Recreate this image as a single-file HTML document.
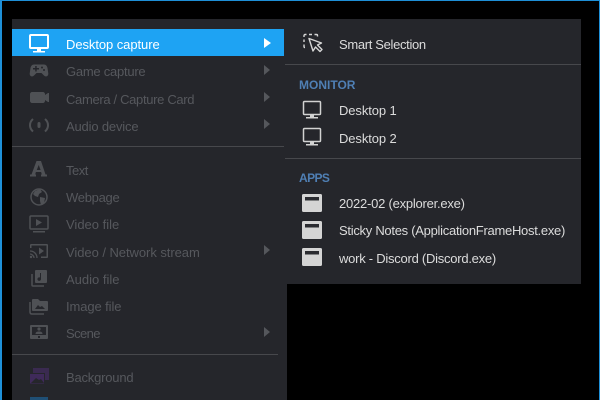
<!DOCTYPE html>
<html><head><meta charset="utf-8">
<style>
html,body{margin:0;padding:0;background:#000;}
#r{position:relative;width:600px;height:400px;overflow:hidden;background:#000;font-family:"Liberation Sans",sans-serif;font-size:13px;}
.b{position:absolute;}
.t{position:absolute;white-space:nowrap;line-height:16px;height:16px;}
.d{color:#56585d;left:66px;}
.l{color:#dcdcdc;left:339px;}
.h{color:#4f7fb4;left:299px;font-weight:bold;font-size:12px;}
svg{position:absolute;left:0;top:0;}
</style></head><body>
<div id="r">
<div class="b" style="left:0;top:0;width:600px;height:1px;background:#1e8fd6"></div>
<div class="b" style="left:0;top:0;width:2px;height:400px;background:#1e8fd6"></div>
<div class="b" style="left:599px;top:0;width:1px;height:400px;background:#1e8fd6"></div>
<div class="b" style="left:12px;top:19px;width:275px;height:381px;background:#25262b"></div>
<div class="b" style="left:285px;top:19px;width:296px;height:265px;background:#25262b"></div>
<div class="b" style="left:12px;top:29px;width:272px;height:27px;background:#1ea3f3"></div>
<div class="b" style="left:12px;top:146px;width:272px;height:1px;background:#47484c"></div>
<div class="b" style="left:12px;top:354px;width:266px;height:1px;background:#47484c"></div>
<div class="b" style="left:285px;top:64px;width:296px;height:1px;background:#47484c"></div>
<div class="b" style="left:285px;top:158px;width:296px;height:1px;background:#47484c"></div>

<div class="t" style="left:66px;top:37px;color:#fff;letter-spacing:-.07px">Desktop capture</div>
<div class="t d" style="top:64px;letter-spacing:-.25px">Game capture</div>
<div class="t d" style="top:92px;letter-spacing:-.33px">Camera / Capture Card</div>
<div class="t d" style="top:119px;letter-spacing:-.17px">Audio device</div>
<div class="t d" style="top:163px;letter-spacing:-.5px">Text</div>
<div class="t d" style="top:190px;letter-spacing:-.28px">Webpage</div>
<div class="t d" style="top:217px">Video file</div>
<div class="t d" style="top:245px;letter-spacing:-.05px">Video / Network stream</div>
<div class="t d" style="top:272px">Audio file</div>
<div class="t d" style="top:299px;letter-spacing:-.1px">Image file</div>
<div class="t d" style="top:326px;letter-spacing:-.6px">Scene</div>
<div class="t d" style="top:370px;letter-spacing:-.2px">Background</div>

<div class="t l" style="top:37px;letter-spacing:-.33px">Smart Selection</div>
<div class="t h" style="top:77px">MONITOR</div>
<div class="t l" style="top:103px;letter-spacing:-.1px">Desktop 1</div>
<div class="t l" style="top:131px;letter-spacing:-.1px">Desktop 2</div>
<div class="t h" style="top:170px;letter-spacing:-.6px">APPS</div>
<div class="t l" style="top:196px;letter-spacing:-.23px">2022-02 (explorer.exe)</div>
<div class="t l" style="top:223px;letter-spacing:-.28px">Sticky Notes (ApplicationFrameHost.exe)</div>
<div class="t l" style="top:251px;letter-spacing:-.25px">work - Discord (Discord.exe)</div>

<svg width="600" height="400" viewBox="0 0 600 400">
<!-- arrows -->
<path d="M264 38l7 5-7 5z" fill="#fff"/>
<g fill="#55575c">
<path d="M264 65l6 5-6 5z"/><path d="M264 92l6 5-6 5z"/><path d="M264 119l6 5-6 5z"/><path d="M264 245l6 5-6 5z"/><path d="M264 327l6 5-6 5z"/>
</g>
<!-- desktop selected -->
<g fill="none" stroke="#fff" stroke-width="2"><rect x="30" y="35" width="18" height="13" rx="1"/></g>
<path d="M37 49h4v2h4v1.500H33V51h4z" fill="#fff"/>
<!-- disabled icons -->
<g fill="#4f5155">
<!-- gamepad -->
<path d="M34 64.500h10c2 0 3 1.500 3.500 3.500l.8 5.500c.2 2.500-2.300 4-4.300 2l-2.500-2.500h-5l-2.500 2.500c-2 2-4.500.5-4.300-2l.8-5.500c.5-2 1.500-3.500 3.500-3.500z"/>
<!-- camera -->
<path d="M32 92h11c1 0 2 1 2 2v1l3-2h1v9h-1l-3-2v1c0 1-1 2-2 2H32c-1 0-2-1-2-2v-7c0-1 1-2 2-2z"/>
<!-- audio dot -->
<rect x="37.500" y="122" width="3" height="6" rx="1.500"/>
<!-- A -->
<path fill-rule="evenodd" d="M36.500 161h4.500l4.500 13.500h1.500v2h-6v-2h.8l-.7-2.500h-5.200l-.7 2.500h.8v2h-6v-2h1.500zM38.700 165l-1.900 5h3.800z"/>
</g>
<!-- audio arcs -->
<path d="M33 119c-4 3.500-4 9 0 12.500M45 119c4 3.500 4 9 0 12.500" fill="none" stroke="#4f5155" stroke-width="2"/>
<g fill="#25262b"><rect x="33" y="68" width="6" height="1.500"/><rect x="35.200" y="66" width="1.500" height="5.500"/><circle cx="42" cy="67.500" r="1"/><circle cx="44" cy="70" r="1"/></g>
<!-- globe -->
<circle cx="39" cy="197" r="8" fill="none" stroke="#4f5155" stroke-width="1.500"/>
<path d="M35 191l5-2 2 3-3 2-1 3-3-1-2-2zM40 197l5 1-1 5-3 2-1-4z" fill="#4f5155"/>
<!-- video -->
<g fill="none" stroke="#4f5155" stroke-width="1.500"><rect x="30" y="216" width="18" height="13" rx="1"/></g>
<path d="M36 219l6 3.500-6 3.500zM33 231h12v1.500H33z" fill="#4f5155"/>
<!-- stream -->
<path d="M31 244h16c.5 0 1 .5 1 1v12c0 .5-.5 1-1 1H41v-1.500h5.500v-11h-15V248H30v-3c0-.5.500-1 1-1z" fill="#4f5155"/>
<path d="M39 247.500l5 3.500-5 3.500z" fill="#4f5155"/>
<path d="M30 251c4 0 7 3 7 7M30 254c2 0 4 2 4 4" fill="none" stroke="#4f5155" stroke-width="1.300"/>
<circle cx="31" cy="257" r="1.200" fill="#4f5155"/>
<!-- audio file -->
<rect x="35" y="270" width="12" height="13" rx="1" fill="#4f5155"/>
<path d="M32 274v11c0 .6.400 1 1 1h11" fill="none" stroke="#4f5155" stroke-width="1.500"/>
<path d="M41 273v6a1.800 1.800 0 1 1-1-1.500V273z" fill="#25262b"/>
<!-- image file -->
<path d="M33 299h5l2 2h7c.6 0 1 .4 1 1v8c0 .6-.4 1-1 1H33c-.6 0-1-.4-1-1v-10c0-.6.400-1 1-1z" fill="#4f5155"/>
<path d="M30 302v10c0 1 .5 2 2 2h12" fill="none" stroke="#4f5155" stroke-width="1.500"/>
<path d="M35 309l3-4 2 2 2-1 3 3z" fill="#25262b"/>
<!-- scene -->
<rect x="30" y="325" width="18" height="14" rx="1" fill="#4f5155"/>
<rect x="32" y="327" width="14" height="8" fill="#25262b"/>
<circle cx="39" cy="329" r="1.600" fill="#4f5155"/>
<path d="M35.500 334c0-2 1.500-2.500 3.500-2.500s3.500.5 3.500 2.500z" fill="#4f5155"/>
<rect x="38" y="336" width="2" height="2" fill="#25262b"/>
<!-- background -->
<rect x="33" y="368" width="16" height="12" fill="#3a2a50"/>
<rect x="29.500" y="373.500" width="15" height="10.500" fill="#3f2a5a" stroke="#25262b" stroke-width="1"/>
<path d="M31 383l5-5 3 2 2-1 3 4z" fill="#25262b"/>
<rect x="30" y="397" width="18" height="3" fill="#1f4f75"/>
<!-- smart selection -->
<g fill="none" stroke="#d6d6d6" stroke-width="1.400">
<path d="M304 37v-1.500c0-.5.500-1 1-1h1.500M309 34.500h3M314.500 34.500h2c.6 0 1 .4 1 1v1M304 39.500v2.500M304 44.500v2c0 .5.300 1 1 1"/>
<path d="M309 38.500l4 12.500 2.500-4 4.500 4.500 2-2-4.500-4.500 4-2z" stroke-linejoin="round"/>
</g>
<!-- monitor icons -->
<g fill="none" stroke="#d2d2d2" stroke-width="1.500">
<rect x="303.500" y="101.500" width="17" height="13" rx="1"/>
<rect x="303.500" y="128.500" width="17" height="13" rx="1"/>
</g>
<path d="M310 115h4v2h4v1.500h-12V117h4zM310 142h4v2h4v1.500h-12V144h4z" fill="#d2d2d2"/>
<!-- windows -->
<g fill="#d4d4d4">
<rect x="302" y="194" width="20" height="18" rx="1.500"/>
<rect x="302" y="221" width="20" height="18" rx="1.500"/>
<rect x="302" y="248" width="20" height="18" rx="1.500"/>
</g>
<g fill="#2a2b30">
<rect x="305" y="197" width="14" height="3.500"/>
<rect x="305" y="224" width="14" height="3.500"/>
<rect x="305" y="251" width="14" height="3.500"/>
</g>
</svg>
</div>
</body></html>
